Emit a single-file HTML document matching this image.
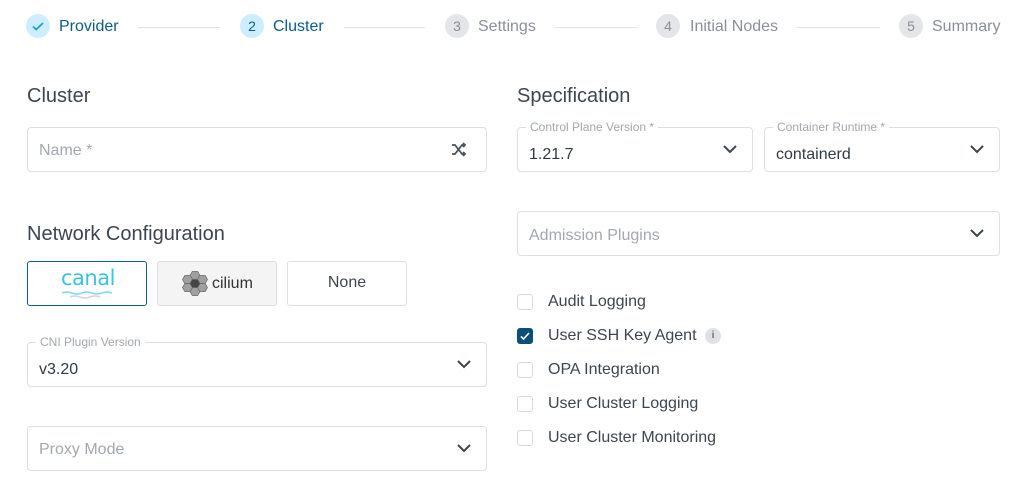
<!DOCTYPE html>
<html><head><meta charset="utf-8"><style>
*{box-sizing:border-box;margin:0;padding:0}
body{width:1026px;height:487px;background:#fff;font-family:"Liberation Sans",sans-serif;color:#3c4650;position:relative;overflow:hidden}
.a{position:absolute}
.circ{position:absolute;width:24px;height:24px;border-radius:50%;top:14px;font-size:14px;text-align:center;line-height:24px}
.act{background:#cdeeff;color:#0b5d8a}
.ina{background:#e3e5e8;color:#8a9098}
.sl{position:absolute;top:18px;font-size:16px}
.line{position:absolute;top:27px;height:1px;background:#dfe2e5}
h2{position:absolute;font-size:20px;font-weight:normal;color:#3d4650}
.f{position:absolute;border:1px solid #dcdfe3;border-radius:4px;height:45px}
.ph{position:absolute;left:11px;top:14px;font-size:16px;color:#a2a8ae}
.val{position:absolute;left:11px;top:18px;font-size:16px;color:#2f3a45}
.lab{position:absolute;top:-8px;left:8px;background:#fff;padding:0 4px;font-size:12px;color:#a2a8ae}
.chev{position:absolute;right:15px;top:16px}
.btn{position:absolute;top:261px;height:45px;width:120px;border:1px solid #dcdfe3;border-radius:3px}
.cb{position:absolute;left:517px;width:16px;height:16px;border:1px solid #d5d9dd;border-radius:3px}
.ct{position:absolute;left:548px;font-size:16px;color:#3c4650}
</style></head><body>
<div class="circ act" style="left:26px"><svg width="24" height="24" viewBox="0 0 24 24"><path d="M7 12.5l3.2 3L17 9" fill="none" stroke="#1e9fd8" stroke-width="1.8"/></svg></div>
<div class="sl" style="left:59px;color:#0b5d8a">Provider</div>
<div class="line" style="left:138px;width:82px"></div>
<div class="circ act" style="left:240px">2</div>
<div class="sl" style="left:273px;color:#0b5d8a">Cluster</div>
<div class="line" style="left:344px;width:81px"></div>
<div class="circ ina" style="left:445px">3</div>
<div class="sl" style="left:478px;color:#8a9098">Settings</div>
<div class="line" style="left:555px;width:82px"></div>
<div class="circ ina" style="left:656px">4</div>
<div class="sl" style="left:690px;color:#8a9098">Initial Nodes</div>
<div class="line" style="left:797px;width:83px"></div>
<div class="circ ina" style="left:899px">5</div>
<div class="sl" style="left:932px;color:#8a9098">Summary</div>

<h2 style="left:27px;top:85px">Cluster</h2>
<div class="f" style="left:27px;top:127px;width:460px"><div class="ph">Name *</div>
<svg class="a" style="right:19px;top:14px" width="16" height="16" viewBox="0 0 16 16"><path d="M1 3h3l7 9h3M1 12h3l7-9h3M12 1l2 2-2 2M12 10l2 2-2 2" fill="none" stroke="#4a525a" stroke-width="1.8"/></svg></div>

<h2 style="left:27px;top:223px">Network Configuration</h2>
<div class="btn" style="left:27px;border-color:#0b5d8a"><div class="a" style="left:33px;top:4px;font-family:'DejaVu Sans',sans-serif;font-size:21px;color:#3cc3e0;letter-spacing:-0.5px">canal</div>
<svg class="a" style="left:32px;top:28px" width="58" height="10"><path d="M2 3q5 -2 10 0t10 0t10 0t10 0t10 0" stroke="#7fd9ee" fill="none" stroke-width="1.6"/><path d="M10 7q5 -2 10 0t10 0t10 0" stroke="#c9d6e8" fill="none" stroke-width="1.6"/></svg></div>
<div class="btn" style="left:157px;background:#f4f4f5"><svg class="a" style="left:24px;top:9px" width="26" height="26" viewBox="0 0 26 26">
<g stroke="#666" stroke-width="0.7" fill="#a0a0a0">
<polygon points="8,4.5 10.3,0.5 15.7,0.5 18,4.5 15.7,8.5 10.3,8.5" transform="translate(0,0)"/>
<polygon points="8,4.5 10.3,0.5 15.7,0.5 18,4.5 15.7,8.5 10.3,8.5" transform="translate(0,16)"/>
<polygon points="8,4.5 10.3,0.5 15.7,0.5 18,4.5 15.7,8.5 10.3,8.5" transform="translate(-7.5,4)"/>
<polygon points="8,4.5 10.3,0.5 15.7,0.5 18,4.5 15.7,8.5 10.3,8.5" transform="translate(7.5,4)"/>
<polygon points="8,4.5 10.3,0.5 15.7,0.5 18,4.5 15.7,8.5 10.3,8.5" transform="translate(-7.5,12)"/>
<polygon points="8,4.5 10.3,0.5 15.7,0.5 18,4.5 15.7,8.5 10.3,8.5" transform="translate(7.5,12)"/>
<polygon points="8,4.5 10.3,0.5 15.7,0.5 18,4.5 15.7,8.5 10.3,8.5" transform="translate(0,8)" fill="#444"/></g></svg>
<div class="a" style="left:54px;top:13px;font-size:16px;color:#333">cilium</div></div>
<div class="btn" style="left:287px"><div class="a" style="width:100%;text-align:center;top:12px;font-size:16px;color:#3c4650">None</div></div>

<div class="f" style="left:27px;top:342px;width:460px"><div class="lab">CNI Plugin Version</div><div class="val">v3.20</div>
<svg class="chev" width="14" height="10" viewBox="0 0 14 10"><path d="M1 2l6 6 6-6" fill="none" stroke="#3c4650" stroke-width="2"/></svg></div>
<div class="f" style="left:27px;top:426px;width:460px"><div class="ph">Proxy Mode</div>
<svg class="chev" width="14" height="10" viewBox="0 0 14 10"><path d="M1 2l6 6 6-6" fill="none" stroke="#3c4650" stroke-width="2"/></svg></div>

<h2 style="left:517px;top:85px">Specification</h2>
<div class="f" style="left:517px;top:127px;width:236px"><div class="lab">Control Plane Version *</div><div class="val">1.21.7</div>
<svg class="chev" width="14" height="10" viewBox="0 0 14 10"><path d="M1 2l6 6 6-6" fill="none" stroke="#3c4650" stroke-width="2"/></svg></div>
<div class="f" style="left:764px;top:127px;width:236px"><div class="lab">Container Runtime *</div><div class="val">containerd</div>
<svg class="chev" width="14" height="10" viewBox="0 0 14 10"><path d="M1 2l6 6 6-6" fill="none" stroke="#3c4650" stroke-width="2"/></svg></div>
<div class="f" style="left:517px;top:211px;width:483px"><div class="ph" style="top:15px">Admission Plugins</div>
<svg class="chev" width="14" height="10" viewBox="0 0 14 10"><path d="M1 2l6 6 6-6" fill="none" stroke="#3c4650" stroke-width="2"/></svg></div>

<div class="cb" style="top:294px"></div><div class="ct" style="top:293px">Audit Logging</div>
<div class="cb" style="top:328px;background:#0b4f78;border-color:#0b4f78"><svg width="14" height="14" viewBox="0 0 14 14"><path d="M3 7.5l2.5 2.5L11 4" fill="none" stroke="#fff" stroke-width="1.6"/></svg></div><div class="ct" style="top:327px">User SSH Key Agent</div>
<div class="a" style="left:705px;top:328px;width:16px;height:16px;border-radius:50%;background:#dfe1e4;color:#6a7078;font-size:10px;font-weight:bold;text-align:center;line-height:16px">i</div>
<div class="cb" style="top:362px"></div><div class="ct" style="top:361px">OPA Integration</div>
<div class="cb" style="top:396px"></div><div class="ct" style="top:395px">User Cluster Logging</div>
<div class="cb" style="top:430px"></div><div class="ct" style="top:429px">User Cluster Monitoring</div>
</body></html>
